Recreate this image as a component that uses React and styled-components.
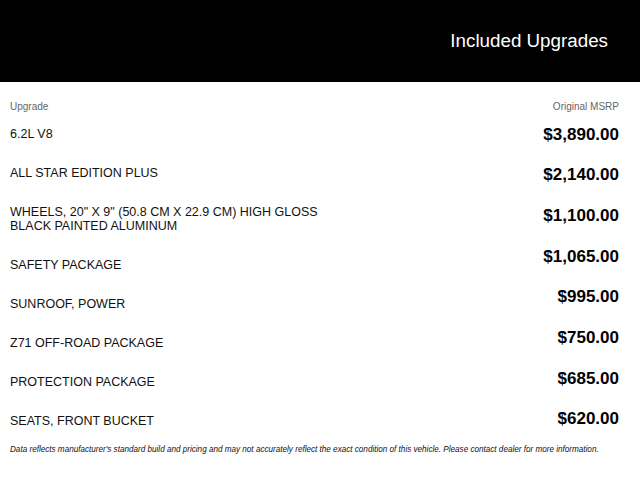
import styled, { createGlobalStyle } from "styled-components";

const GlobalStyle = createGlobalStyle`
  body {
    margin: 0;
    background: #fff;
    font-family: "Liberation Sans", Arial, sans-serif;
    color: #000;
  }
`;

const upgrades = [
  { name: "6.2L V8", price: "$3,890.00" },
  { name: "ALL STAR EDITION PLUS", price: "$2,140.00" },
  {
    name: 'WHEELS, 20" X 9" (50.8 CM X 22.9 CM) HIGH GLOSS BLACK PAINTED ALUMINUM',
    price: "$1,100.00",
  },
  { name: "SAFETY PACKAGE", price: "$1,065.00" },
  { name: "SUNROOF, POWER", price: "$995.00" },
  { name: "Z71 OFF-ROAD PACKAGE", price: "$750.00" },
  { name: "PROTECTION PACKAGE", price: "$685.00" },
  { name: "SEATS, FRONT BUCKET", price: "$620.00" },
];

const Page = styled.div`
  width: 640px;
  height: 480px;
  overflow: hidden;
`;

const Banner = styled.header`
  height: 82px;
  background: #000;
  display: flex;
  align-items: center;
  justify-content: flex-end;
  padding-right: 32px;
`;

const Title = styled.h1`
  margin: 0;
  font-size: 18.8px;
  font-weight: 400;
  color: #fff;
  line-height: 22px;
`;

const Body = styled.section`
  padding: 18px 21px 0 10px;
`;

const HeadRow = styled.div`
  display: flex;
  justify-content: space-between;
  font-size: 10px;
  line-height: 13px;
  color: #666;
`;

const Columns = styled.div`
  display: flex;
  justify-content: space-between;
  margin-top: 1.5px;
`;

const List = styled.div`
  display: flex;
  flex-direction: column;
  align-items: ${(p) => (p.$end ? "flex-end" : "flex-start")};
`;

const Name = styled.div`
  font-size: 12.5px;
  line-height: 14px;
  padding: 12.5px 0;
  width: 320px;
  color: #111;
`;

const Price = styled.div`
  font-size: 17px;
  font-weight: 700;
  line-height: 20.7px;
  padding: 10px 0;
`;

const Disclaimer = styled.p`
  margin: 3px 0 0;
  font-size: 8.15px;
  line-height: 11px;
  font-style: italic;
  color: #111;
  white-space: nowrap;
`;

export default function App() {
  return (
    <Page>
      <GlobalStyle />
      <Banner>
        <Title>Included Upgrades</Title>
      </Banner>
      <Body>
        <HeadRow>
          <span>Upgrade</span>
          <span>Original MSRP</span>
        </HeadRow>
        <Columns>
          <List>
            {upgrades.map((u) => (
              <Name key={u.name}>{u.name}</Name>
            ))}
          </List>
          <List $end>
            {upgrades.map((u) => (
              <Price key={u.name}>{u.price}</Price>
            ))}
          </List>
        </Columns>
        <Disclaimer>
          Data reflects manufacturer's standard build and pricing and may not
          accurately reflect the exact condition of this vehicle. Please contact
          dealer for more information.
        </Disclaimer>
      </Body>
    </Page>
  );
}
